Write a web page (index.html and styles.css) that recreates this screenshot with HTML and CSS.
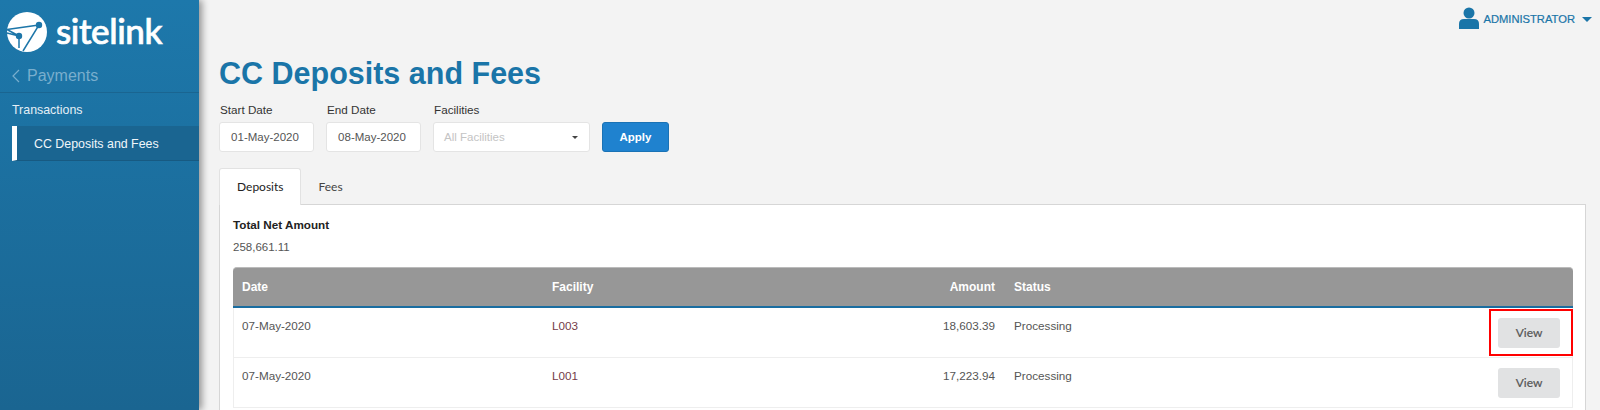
FILE: index.html
```html
<!DOCTYPE html>
<html lang="en">
<head>
    <meta charset="UTF-8">
    <meta name="viewport" content="width=device-width, initial-scale=1.0">
    <title>CC Deposits and Fees</title>
    <link rel="stylesheet" href="styles.css">
</head>
<body>
    <div class="app">
        <aside class="sidebar">
            <div class="brand">
                <svg class="brand-mark" viewBox="0 0 42 42" width="42" height="42">
                    <circle cx="21" cy="21" r="20" fill="#fff"/>
                    <path d="M1 18.5 L33 14 L17 40 M1 18.5 L13 25 L13 37 M1 22 L13 25" fill="none" stroke="#1d76a9" stroke-width="1.5"/>
                    <circle cx="33" cy="14" r="3.2" fill="#1d76a9"/>
                    <circle cx="13" cy="25" r="3.2" fill="#1d76a9"/>
                </svg>
                <span class="brand-name">sitelink</span>
            </div>
            <div class="back-link">
                <svg viewBox="0 0 8 14" width="8" height="14"><path d="M7 1 L1 7 L7 13" fill="none" stroke="#79aecd" stroke-width="1.2"/></svg>
                <span>Payments</span>
            </div>
            <div class="nav-group">Transactions</div>
            <div class="nav-item">CC Deposits and Fees</div>
        </aside>

        <main class="content">
            <div class="user-bar">
                <svg viewBox="0 0 20 22" width="20" height="22">
                    <circle cx="10" cy="6" r="5.5" fill="#1a75a8"/>
                    <path d="M0 22 V17 Q0 12 5 12 H15 Q20 12 20 17 V22 Z" fill="#1a75a8"/>
                </svg>
                <span class="user-name">ADMINISTRATOR</span>
                <span class="user-caret"></span>
            </div>

            <h1 class="page-title">CC Deposits and Fees</h1>

            <div class="filters">
                <div class="field">
                    <label>Start Date</label>
                    <div class="input date-input">01-May-2020</div>
                </div>
                <div class="field">
                    <label>End Date</label>
                    <div class="input date-input">08-May-2020</div>
                </div>
                <div class="field">
                    <label>Facilities</label>
                    <div class="input select-input">
                        <span>All Facilities</span>
                        <span class="select-caret"></span>
                    </div>
                </div>
                <button class="apply-btn">Apply</button>
            </div>

            <div class="tabs">
                <div class="tab active">Deposits</div>
                <div class="tab">Fees</div>
            </div>

            <div class="panel">
                <div class="total-label">Total Net Amount</div>
                <div class="total-value">258,661.11</div>

                <div class="table-wrap">
                    <div class="row head">
                        <div class="col-date">Date</div>
                        <div class="col-facility">Facility</div>
                        <div class="col-amount">Amount</div>
                        <div class="col-status">Status</div>
                    </div>
                    <div class="row">
                        <div class="col-date">07-May-2020</div>
                        <div class="col-facility link">L003</div>
                        <div class="col-amount">18,603.39</div>
                        <div class="col-status">Processing</div>
                        <button class="view-btn">View</button>
                    </div>
                    <div class="row">
                        <div class="col-date">07-May-2020</div>
                        <div class="col-facility link">L001</div>
                        <div class="col-amount">17,223.94</div>
                        <div class="col-status">Processing</div>
                        <button class="view-btn">View</button>
                    </div>
                    <div class="highlight"></div>
                </div>
            </div>
        </main>
    </div>
</body>
</html>
```

FILE: styles.css
```css
body {
    margin: 0;
    height: 410px;
    overflow: hidden;
    background-color: #f3f3f3;
    font-family: "Liberation Sans", Arial, sans-serif;
    font-size: 12px;
    color: #555;
}

.app {
    display: flex;
    height: 410px;
}

.sidebar {
    flex: 0 0 199px;
    background: linear-gradient(#1d78ab, #1a6591);
    box-shadow: 3px 0 7px rgba(0, 0, 0, 0.4);
    color: #fff;
}

.brand {
    display: flex;
    align-items: center;
    gap: 8px;
    height: 63px;
    padding-left: 6px;
}

.brand-name {
    padding-bottom: 4px;
    font-family: Lato, sans-serif;
    font-size: 35px;
    font-weight: 500;
    letter-spacing: -0.4px;
    -webkit-text-stroke: 0.7px #fff;
    color: #fff;
}

.back-link {
    display: flex;
    align-items: center;
    gap: 7px;
    height: 30px;
    padding: 0 0 4px 12px;
    border-bottom: 1px solid #1a6591;
    box-sizing: border-box;
    font-size: 16px;
    line-height: 22px;
    color: #79aecd;
}

.nav-group {
    height: 33px;
    line-height: 34px;
    padding-left: 12px;
    font-size: 12.4px;
    color: #e4eff6;
}

.nav-item {
    height: 35px;
    line-height: 36px;
    margin-left: 12px;
    padding-left: 17px;
    border-left: 5px solid #fff;
    border-bottom: 1px solid #175a82;
    background-color: #1a6591;
    font-size: 12.4px;
    box-sizing: border-box;
    color: #f0f6fa;
}

.content {
    flex: 1;
    padding: 0 14px 0 20px;
    min-width: 0;
}

.user-bar {
    display: flex;
    align-items: center;
    justify-content: flex-end;
    gap: 4px;
    height: 36px;
    margin-right: -6px;
    color: #1a75a8;
}

.user-name {
    padding-top: 2px;
    font-size: 11.2px;
    -webkit-text-stroke: 0.2px #1a75a8;
}

.user-caret {
    width: 0;
    height: 0;
    margin: 2px 0 0 3px;
    border-left: 5px solid transparent;
    border-right: 5px solid transparent;
    border-top: 5px solid #1a75a8;
}

.page-title {
    margin: 17px 0 0;
    font-size: 30.5px;
    line-height: 40px;
    font-weight: bold;
    color: #1a75a8;
}

.filters {
    display: flex;
    align-items: flex-end;
    gap: 12px;
    margin-top: 10px;
}

.field label {
    display: block;
    font-size: 11.7px;
    line-height: 14px;
    margin-bottom: 5px;
    padding-left: 1px;
    color: #333;
}

.input {
    display: flex;
    align-items: center;
    height: 30px;
    box-sizing: border-box;
    background-color: #fff;
    border: 1px solid #e4e4e4;
    border-radius: 3px;
    font-size: 11.5px;
}

.date-input {
    width: 95px;
    justify-content: center;
    padding-right: 3px;
}

.select-input {
    width: 157px;
    justify-content: space-between;
    padding: 0 11px 0 10px;
    color: #c4c4c4;
}

.select-caret {
    width: 0;
    height: 0;
    border-left: 3px solid transparent;
    border-right: 3px solid transparent;
    border-top: 3px solid #444;
}

.apply-btn {
    width: 67px;
    height: 30px;
    background-color: #1f82cf;
    border: 1px solid #1a72b5;
    border-radius: 3px;
    font-family: inherit;
    font-size: 11.5px;
    font-weight: bold;
    color: #fff;
}

.tabs {
    display: flex;
    margin-top: 15px;
}

.tab {
    padding: 0 17px;
    height: 36px;
    line-height: 39px;
    font-family: Lato, sans-serif;
    font-size: 12px;
    color: #444;
}

.tab.active {
    position: relative;
    top: 1px;
    line-height: 35px;
    background-color: #fff;
    border: 1px solid #e2e2e2;
    border-bottom: none;
    border-radius: 3px 3px 0 0;
    color: #222;
}

.panel {
    height: 206px;
    padding: 13px 12px 0 13px;
    background-color: #fff;
    border: 1px solid #d6d6d6;
    border-bottom: none;
}

.total-label {
    font-size: 11.7px;
    font-weight: bold;
    line-height: 14px;
    color: #222;
}

.total-value {
    margin-top: 8px;
    font-size: 11.5px;
    line-height: 14px;
}

.table-wrap {
    position: relative;
    margin-top: 13px;
}

.row {
    display: flex;
    height: 49px;
    padding: 0 8px;
    border-bottom: 1px solid #eee;
    border-left: 1px solid #eee;
    border-right: 1px solid #eee;
    line-height: 36px;
    font-size: 11.7px;
}

.row.head {
    height: 38px;
    line-height: 38px;
    background-color: #979797;
    border: none;
    border-top: 1px solid #bbb;
    border-bottom: 2px solid #1a6da0;
    border-radius: 4px 4px 0 0;
    padding: 0 9px;
    font-size: 12px;
    font-weight: bold;
    color: #fff;
}

.col-date {
    width: 310px;
}

.col-facility {
    width: 200px;
}

.link {
    color: #743c48;
}

.col-amount {
    width: 243px;
    text-align: right;
}

.col-status {
    margin-left: 19px;
}

.view-btn {
    align-self: center;
    margin-left: auto;
    margin-right: 4px;
    width: 62px;
    height: 30px;
    background-color: #e1e2e3;
    border: none;
    border-radius: 3px;
    font-family: Lato, sans-serif;
    font-size: 12px;
    -webkit-text-stroke: 0.2px #555;
    color: #555;
}

.highlight {
    position: absolute;
    top: 42px;
    right: 0;
    width: 80px;
    height: 43px;
    border: 2px solid #f00;
}
```
